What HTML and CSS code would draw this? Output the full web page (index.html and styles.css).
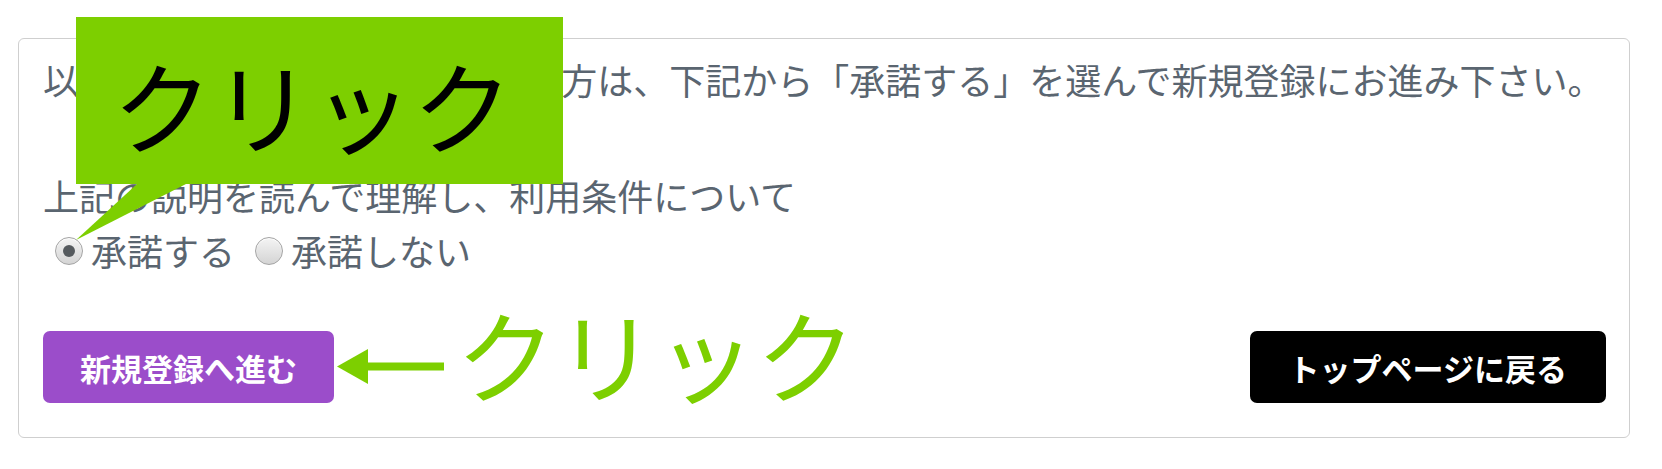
FILE: index.html
```html
<!DOCTYPE html>
<html lang="ja">
<head>
<meta charset="utf-8">
<title>利用条件</title>
<link rel="stylesheet" href="styles.css">
</head>
<body>
<div class="page">
  <div class="panel">
    <p class="lead"><span class="lead-start">以上の利用条件に同意いただける</span>方は、下記から「承諾する」を選んで新規登録にお進み下さい。</p>
    <p class="question">上記の説明を読んで理解し、利用条件について</p>
    <div class="choices">
      <label class="choice"><span class="radio is-checked"></span>承諾する</label>
      <label class="choice"><span class="radio"></span>承諾しない</label>
    </div>
    <div class="actions">
      <a class="btn btn-purple" href="#">新規登録へ進む</a>
      <a class="btn btn-black" href="#">トップページに戻る</a>
    </div>
  </div>

  <div class="callout">クリック</div>
  <svg class="callout-tail" width="120" height="60" viewBox="0 0 120 60">
    <polygon points="61,0 110,0 0,56" fill="#7dcf00"/>
  </svg>

  <div class="hint">
    <svg class="hint-arrow" width="107" height="35" viewBox="0 0 107 35">
      <polygon points="0,17.5 31,0 31,35" fill="#7dcf00"/>
      <rect x="30" y="13.5" width="77" height="8" fill="#7dcf00"/>
    </svg>
    <span class="hint-text">クリック</span>
  </div>
</div>
</body>
</html>
```

FILE: styles.css
```css
* { box-sizing: border-box; }

html, body {
  margin: 0;
  padding: 0;
  background: #ffffff;
}

body {
  font-family: "Noto Sans CJK JP", "Noto Sans", sans-serif;
  color: #5a6570;
  text-spacing-trim: space-all;
}

.page {
  position: relative;
  width: 1662px;
  height: 469px;
  padding: 38px 0 0 18px;
}

.panel {
  width: 1612px;
  height: 400px;
  border: 1px solid #cfcfcf;
  border-radius: 6px;
  padding: 13px 23px 0 24px;
}

.lead {
  margin: 0 0 62px;
  font-size: 36px;
  line-height: 54px;
  white-space: nowrap;
}

.lead-start {
  letter-spacing: -1.45px;
}

.question {
  margin: 0;
  font-size: 36px;
  line-height: 55px;
  white-space: nowrap;
}

.choices {
  display: flex;
  gap: 8px;
  height: 55px;
  font-size: 36px;
  line-height: 55px;
}

.choice {
  display: flex;
  align-items: center;
}

.radio {
  width: 28px;
  height: 28px;
  margin: 0 8px 0 12px;
  border-radius: 50%;
  border: 1px solid #a4a4a4;
  background: linear-gradient(#f4f4f4, #d4d4d4);
  box-shadow: inset 0 1px 1px #ffffff;
  display: flex;
  align-items: center;
  justify-content: center;
}

.radio.is-checked::after {
  content: "";
  width: 12px;
  height: 12px;
  border-radius: 50%;
  background: #555a5e;
}

.actions {
  margin-top: 53px;
  display: flex;
  justify-content: space-between;
}

.btn {
  display: flex;
  align-items: center;
  justify-content: center;
  height: 72px;
  padding: 0 37px;
  border-radius: 7px;
  color: #ffffff;
  font-size: 31px;
  font-weight: bold;
  text-decoration: none;
  white-space: nowrap;
}

.btn-purple { background: #9b4dca; }
.btn-black { background: #000000; padding: 0 39px; }

/* annotation overlays */
.callout {
  position: absolute;
  left: 76px;
  top: 17px;
  width: 487px;
  height: 167px;
  background: #7dcf00;
  color: #000000;
  font-size: 100px;
  line-height: 1;
  display: flex;
  align-items: center;
  justify-content: center;
  padding: 6px 14px 0 0;
}

.callout-tail {
  position: absolute;
  left: 76px;
  top: 184px;
}

.hint {
  position: absolute;
  left: 337px;
  top: 296px;
  display: flex;
  align-items: flex-start;
  color: #7dcf00;
}

.hint-arrow {
  margin-top: 53px;
  margin-right: 12px;
}

.hint-text {
  font-size: 100px;
  line-height: 114px;
}
```
